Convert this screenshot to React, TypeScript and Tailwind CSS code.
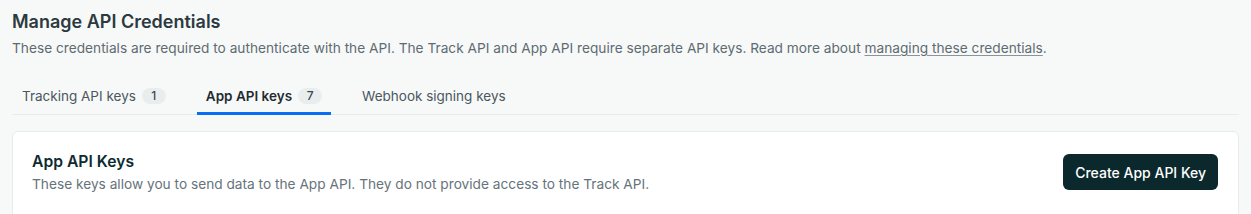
export default function App() {
  const tabs = [
    { label: "Tracking API keys", count: 1, active: false },
    { label: "App API keys", count: 7, active: true },
    { label: "Webhook signing keys", count: null, active: false },
  ];

  return (
    <main
      className="min-h-screen bg-[#f7f9f9] px-3 pt-2"
      style={{ fontFamily: "Inter, 'Liberation Sans', sans-serif" }}
    >
      <h1 className="text-[18px] leading-7 font-semibold text-[#2c3a3f]">
        Manage API Credentials
      </h1>
      <p className="mt-0.5 text-[13.7px] leading-5 text-[#5e6b70]">
        These credentials are required to authenticate with the API. The Track API and App API
        require separate API keys. Read more about{" "}
        <a href="#" className="underline underline-offset-2 decoration-[#8a9599]">
          managing these credentials
        </a>
        .
      </p>

      <nav className="mt-5 flex gap-[21px] border-b border-[#e6ebeb]">
        {tabs.map((t) => (
          <button
            key={t.label}
            className={
              t.active
                ? "-mb-px flex items-center border-b-[3px] border-[#0a6ef5] px-[9px] pt-2 pb-[6px] text-[13.5px] leading-5 font-semibold text-[#1f2b30]"
                : "-mb-px flex items-center border-b-[3px] border-transparent px-[10px] pt-2 pb-[6px] text-[13.5px] leading-5 text-[#4a575c]"
            }
          >
            {t.label}
            {t.count !== null && (
              <span className="ml-1.5 flex h-4 w-6 items-center justify-center rounded-full bg-[#e8eeee] text-[12px] font-medium text-[#3c484c]">
                {t.count}
              </span>
            )}
          </button>
        ))}
      </nav>

      <section className="mt-4 rounded-t-md border border-[#e6ebeb] bg-white px-[19px] pt-[18px] pb-6">
        <div className="flex items-center justify-between">
          <div>
            <h2 className="text-[15.7px] leading-6 font-semibold text-[#0d2b30]">App API Keys</h2>
            <p className="text-[13.7px] leading-5 text-[#66737a]">
              These keys allow you to send data to the App API. They do not provide access to the
              Track API.
            </p>
          </div>
          <button className="mr-px h-9 rounded-md bg-[#0b282c] px-3 text-[14px] font-medium text-white">
            Create App API Key
          </button>
        </div>
      </section>
    </main>
  );
}
